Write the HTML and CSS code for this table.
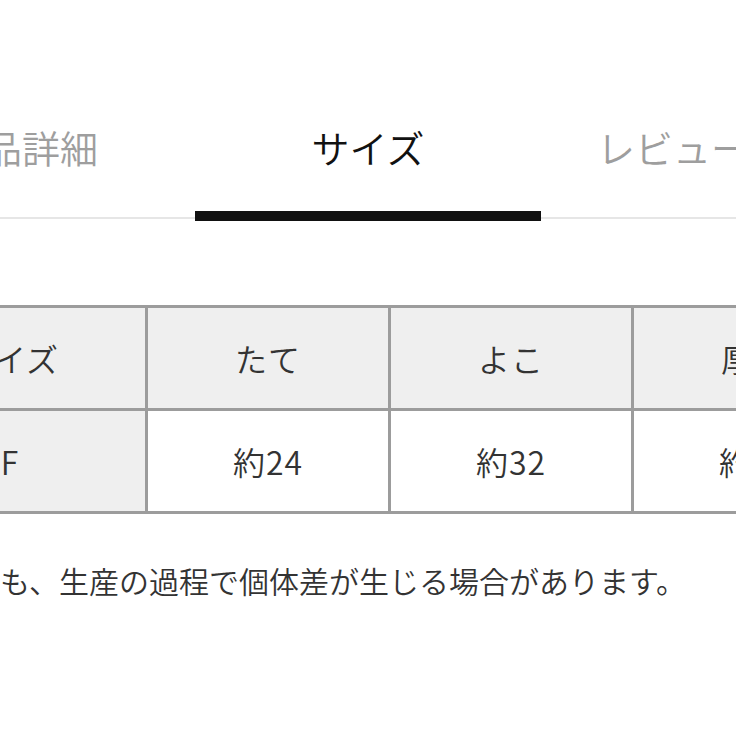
FILE: index.html
```html
<!DOCTYPE html>
<html lang="ja">
<head>
<meta charset="utf-8">
<title>サイズ</title>
<link rel="stylesheet" href="styles.css">
</head>
<body>
<div class="page">
  <nav class="tabbar">
    <div class="tabs">
      <div class="tab">商品詳細</div>
      <div class="tab tab-active">サイズ</div>
      <div class="tab tab-review">レビュー</div>
    </div>
  </nav>
  <section class="size">
    <table class="size-table">
      <colgroup>
        <col class="col-first">
        <col class="col">
        <col class="col">
        <col class="col">
      </colgroup>
      <tr class="head-row">
        <td>サイズ</td>
        <td>たて</td>
        <td>よこ</td>
        <td>厚み</td>
      </tr>
      <tr>
        <td class="label">F</td>
        <td>約24</td>
        <td>約32</td>
        <td>約10</td>
      </tr>
    </table>
    <p class="note">も、生産の過程で個体差が生じる場合があります。</p>
  </section>
</div>
</body>
</html>
```

FILE: styles.css
```css
html, body {
  margin: 0;
  padding: 0;
  background: #fff;
}

body {
  font-family: "Noto Sans CJK JP", "Noto Sans", sans-serif;
  font-weight: 350;
}

.page {
  width: 736px;
  height: 736px;
  overflow: hidden;
}

.tabbar {
  border-bottom: 2px solid #e6e6e6;
}

.tabs {
  display: flex;
  margin-left: -151px;
}

.tab {
  flex: none;
  width: 346px;
  padding-top: 128px;
  padding-bottom: 45px;
  margin-bottom: -4px;
  border-bottom: 10px solid transparent;
  font-size: 38px;
  line-height: 38px;
  text-align: center;
  color: #9e9e9e;
  white-space: nowrap;
}

.tab-active {
  color: #111;
  border-bottom-color: #111;
}

.tab-review {
  text-align: left;
  padding-left: 56px;
  box-sizing: border-box;
}

.size {
  padding-top: 86px;
}

.size-table {
  border-collapse: collapse;
  table-layout: fixed;
  width: 999px;
  margin-left: -128px;
}

.col-first {
  width: 273px;
}

.col {
  width: 243px;
}

.size-table td {
  border: 3px solid #9c9c9c;
  height: 100px;
  padding: 0;
  text-align: center;
  vertical-align: middle;
  font-size: 32px;
  letter-spacing: 1px;
  color: #333;
  white-space: nowrap;
}

.head-row td,
.size-table td.label {
  background: #efefef;
}

.note {
  margin: 49px 0 0;
  font-size: 30px;
  line-height: 35px;
  color: #333;
  white-space: nowrap;
}
```
